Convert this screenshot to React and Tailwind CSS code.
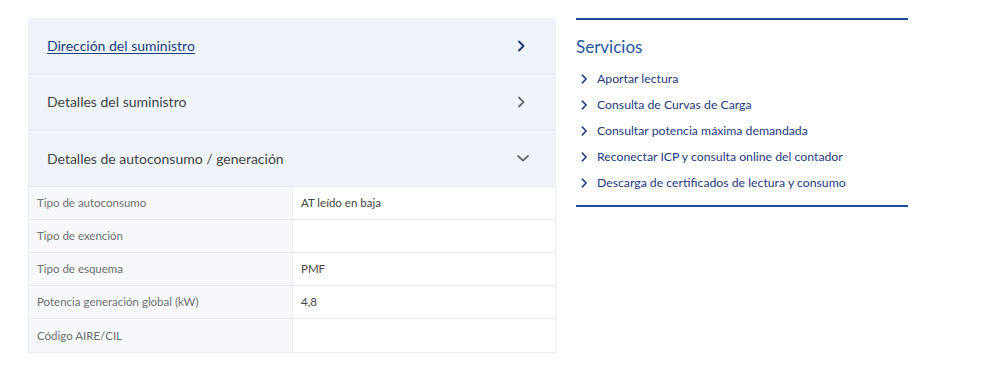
import React from "react";

const Chevron = ({ dir = "right", className = "" }) => (
  <svg width="14" height="14" viewBox="0 0 14 14" className={className} fill="none" stroke="currentColor" strokeWidth="1.8" strokeLinecap="round" strokeLinejoin="round">
    {dir === "right" ? <path d="M5 2.5 L9.5 7 L5 11.5" /> : <path d="M2 5 L7 9.5 L12 5" />}
  </svg>
);

const rows = [
  ["Tipo de autoconsumo", "AT leído en baja"],
  ["Tipo de exención", ""],
  ["Tipo de esquema", "PMF"],
  ["Potencia generación global (kW)", "4,8"],
  ["Código AIRE/CIL", ""],
];

const links = [
  "Aportar lectura",
  "Consulta de Curvas de Carga",
  "Consultar potencia máxima demandada",
  "Reconectar ICP y consulta online del contador",
  "Descarga de certificados de lectura y consumo",
];

export default function App() {
  return (
    <div className="w-[1000px] h-[375px] bg-white flex gap-5 pl-[28px] pt-[18px]" style={{ fontFamily: "Lato, 'Open Sans', sans-serif" }}>
      <div className="w-[528px] flex flex-col">
        <div className="h-[56px] bg-[#eff4fb] border-b border-[#e3e9f1] flex items-center justify-between pl-[19px] pr-[28px]">
          <span className="text-[14px] text-[#1c3f84] underline underline-offset-2">Dirección del suministro</span>
          <Chevron className="text-[#1c3470]" />
        </div>
        <div className="h-[56px] bg-[#eff4fb] border-b border-[#e3e9f1] flex items-center justify-between pl-[19px] pr-[28px]">
          <span className="text-[14px] text-[#444444]">Detalles del suministro</span>
          <Chevron className="text-[#6b6b6b]" />
        </div>
        <div className="h-[57px] bg-[#eff4fb] border-b border-[#e6ebf2] flex items-center justify-between pl-[19px] pr-[26px]">
          <span className="text-[14px] text-[#444444]">Detalles de autoconsumo / generación</span>
          <Chevron dir="down" className="text-[#6b6b6b]" />
        </div>
        <div className="flex flex-col border border-t-0 border-[#e9ecf0]">
          {rows.map(([k, v], i) => (
            <div key={i} className={`flex h-[33px] ${i < rows.length - 1 ? "border-b border-[#e6e9ee]" : ""}`}>
              <div className="w-[264px] bg-[#f6f8fb] flex items-center pl-[8px] text-[11.5px] text-[#707070] border-r border-[#eceff3]">{k}</div>
              <div className="flex-1 bg-white flex items-center pl-[8px] text-[11.5px] text-[#444444]">{v}</div>
            </div>
          ))}
        </div>
      </div>
      <div className="w-[332px] flex flex-col">
        <div className="border-t-2 border-[#1f4d98] pt-[16px]">
          <div className="text-[17px] text-[#1e56a0] leading-[22px]">Servicios</div>
          <div className="flex flex-col mt-[8px]">
            {links.map((l, i) => (
              <div key={i} className="h-[26px] flex items-center gap-[7px] text-[12.25px] text-[#1f3a80]">
                <Chevron className="text-[#1f3a80] w-[12px] h-[12px] ml-[2px]" />
                <span>{l}</span>
              </div>
            ))}
          </div>
        </div>
        <div className="border-t-2 border-[#1f4d98] mt-[9px]" />
      </div>
    </div>
  );
}
